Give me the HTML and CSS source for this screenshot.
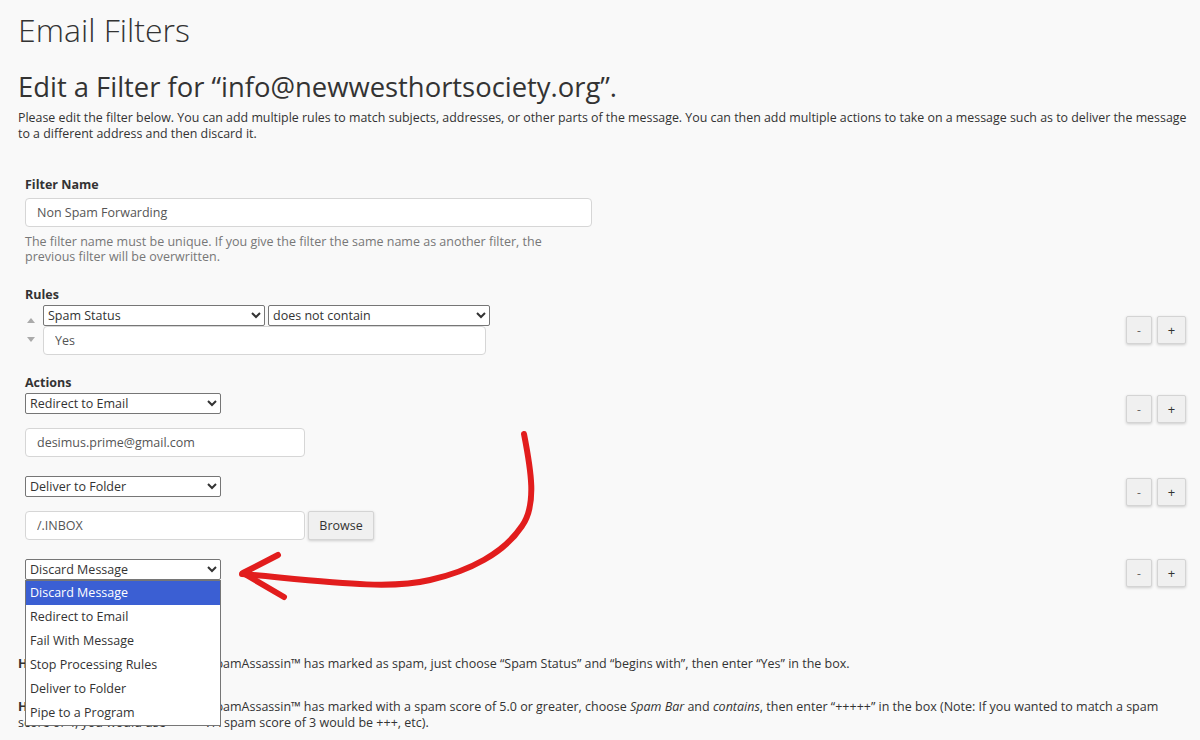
FILE: index.html
```html
<!DOCTYPE html>
<html lang="en">
<head>
<meta charset="utf-8">
<title>Email Filters</title>
<link rel="stylesheet" href="styles.css">
</head>
<body>
<div class="page">
  <h1 class="title">Email Filters</h1>
  <h2 class="subtitle">Edit a Filter for “info@newwesthortsociety.org”.</h2>
  <p class="intro">Please edit the filter below. You can add multiple rules to match subjects, addresses, or other parts of the message. You can then add multiple actions to take on a message such as to deliver the message to a different address and then discard it.</p>

  <form class="filter-form">
    <div class="field">
      <label class="field-label">Filter Name</label>
      <input class="text-input name-input" type="text" value="Non Spam Forwarding">
      <p class="help">The filter name must be unique. If you give the filter the same name as another filter, the previous filter will be overwritten.</p>
    </div>

    <div class="section rules">
      <div class="field-label">Rules</div>
      <div class="row row-center">
        <div class="row-main">
          <div class="sorter"><span class="tri tri-up"></span><span class="tri tri-down"></span></div>
          <div class="rule-fields">
            <div class="select-pair">
              <select class="select select-part"><option>Spam Status</option></select>
              <select class="select select-match"><option>does not contain</option></select>
            </div>
            <input class="text-input rule-input" type="text" value="Yes">
          </div>
        </div>
        <div class="row-buttons">
          <button type="button" class="btn btn-minus">-</button>
          <button type="button" class="btn btn-plus">+</button>
        </div>
      </div>
    </div>

    <div class="section actions">
      <div class="field-label">Actions</div>

      <div class="row action-row">
        <div class="action-fields">
          <select class="select select-action"><option>Redirect to Email</option></select>
          <input class="text-input dest-input" type="text" value="desimus.prime@gmail.com">
        </div>
        <div class="row-buttons offset">
          <button type="button" class="btn btn-minus">-</button>
          <button type="button" class="btn btn-plus">+</button>
        </div>
      </div>

      <div class="row action-row">
        <div class="action-fields">
          <select class="select select-action"><option>Deliver to Folder</option></select>
          <div class="folder-line">
            <input class="text-input dest-input" type="text" value="/.INBOX">
            <button type="button" class="btn btn-browse">Browse</button>
          </div>
        </div>
        <div class="row-buttons offset">
          <button type="button" class="btn btn-minus">-</button>
          <button type="button" class="btn btn-plus">+</button>
        </div>
      </div>

      <div class="row action-row">
        <div class="action-fields">
          <div class="select-wrap">
            <select class="select select-action"><option>Discard Message</option></select>
            <ul class="dropdown">
              <li class="opt opt-active">Discard Message</li>
              <li class="opt">Redirect to Email</li>
              <li class="opt">Fail With Message</li>
              <li class="opt">Stop Processing Rules</li>
              <li class="opt">Deliver to Folder</li>
              <li class="opt">Pipe to a Program</li>
            </ul>
          </div>
        </div>
        <div class="row-buttons">
          <button type="button" class="btn btn-minus">-</button>
          <button type="button" class="btn btn-plus">+</button>
        </div>
      </div>
    </div>
  </form>

  <div class="hints">
    <p><strong>Hint:</strong> To filter all of the mail that SpamAssassin™ has marked as spam, just choose “Spam Status” and “begins with”, then enter “Yes” in the box.</p>
    <p><strong>Hint:</strong> To filter all of the mail that SpamAssassin™ has marked with a spam score of 5.0 or greater, choose <em>Spam Bar</em> and <em>contains</em>, then enter “+++++” in the box (Note: If you wanted to match a spam score of 4, you would use “++++”. A spam score of 3 would be +++, etc).</p>
  </div>

  <svg class="annotation" width="1200" height="740" viewBox="0 0 1200 740" aria-hidden="true">
    <path d="M524 434 C 531 470, 537 505, 522 526 C 504 553, 470 571, 430 580 C 388 590, 330 582, 242 574" fill="none" stroke="#e21d1d" stroke-width="6" stroke-linecap="round"/>
    <path d="M278 555 L 243 573 L 284 597" fill="none" stroke="#e21d1d" stroke-width="6" stroke-linecap="round" stroke-linejoin="round"/>
  </svg>
</div>
</body>
</html>
```

FILE: styles.css
```css
* { box-sizing: border-box; }

html, body {
  margin: 0;
  padding: 0;
  background: #f9f9f9;
}

body {
  font-family: "Open Sans", "Liberation Sans", Arial, sans-serif;
  font-size: 12.5px;
  color: #333;
  overflow: hidden;
  height: 740px;
}

.page {
  position: relative;
  padding: 10px 0 0 18px;
}

.title {
  margin: 0;
  font-size: 32px;
  line-height: 40px;
  font-weight: 300;
  color: #333;
}

.subtitle {
  margin: 20px 0 0;
  font-size: 27.4px;
  line-height: 34px;
  font-weight: 400;
  color: #333;
}

.intro {
  margin: 6px 0 0;
  font-size: 12.4px;
  line-height: 16px;
  color: #333;
}

.filter-form {
  margin-top: 35px;
  padding-left: 7px;
  padding-right: 14px;
}

.field-label {
  display: block;
  font-weight: 700;
  line-height: 16px;
  color: #333;
}

.text-input {
  display: block;
  height: 29px;
  border: 1px solid #d6d6d6;
  border-radius: 4px;
  background: #fff;
  padding: 0 11px;
  font-family: "Open Sans", "Liberation Sans", Arial, sans-serif;
  font-size: 12.5px;
  color: #555;
}

.name-input {
  width: 567px;
  margin-top: 5px;
}

.help {
  margin: 7px 0 0;
  width: 560px;
  line-height: 15px;
  color: #777;
}

.section { margin-top: 23px; }
.actions { margin-top: 20px; }

.row {
  display: flex;
  justify-content: space-between;
  align-items: flex-start;
}

.row-center { align-items: center; margin-top: 2px; }

.row-main { display: flex; align-items: center; }

.sorter {
  width: 18px;
  display: flex;
  flex-direction: column;
  align-items: center;
  gap: 14px;
  padding-right: 6px;
}

.tri {
  width: 0;
  height: 0;
  border-left: 4px solid transparent;
  border-right: 4px solid transparent;
}
.tri-up { border-bottom: 5px solid #aaa; }
.tri-down { border-top: 5px solid #aaa; }

.select-pair { display: flex; gap: 3px; }

.select {
  display: block;
  height: 21px;
  font-family: "Open Sans", "Liberation Sans", Arial, sans-serif;
  font-size: 12.5px;
  color: #333;
  background: #fff;
  border: 1px solid #767676;
  border-radius: 2px;
  padding: 0;
}

.select-part { width: 222px; }
.select-match { width: 222px; }

.rule-input {
  width: 443px;
  margin-top: 0;
}

.row-buttons {
  display: flex;
  gap: 5px;
}
.row-buttons.offset { margin-top: 2px; }

.btn {
  font-family: "Open Sans", "Liberation Sans", Arial, sans-serif;
  font-size: 12px;
  color: #333;
  background: #f0f0f0;
  border: 1px solid #d4d4d4;
  border-radius: 2px;
  box-shadow: 0 1px 3px rgba(0,0,0,0.18);
  height: 28px;
  padding: 0;
  cursor: pointer;
}
.btn-minus { width: 26px; color: #666; }
.btn-plus { width: 29px; font-size: 13px; }

.action-row { margin-top: 19px; }
.actions .field-label + .action-row { margin-top: 2px; }

.select-action { width: 196px; }

.dest-input {
  width: 280px;
  margin-top: 14px;
}

.folder-line {
  display: flex;
  align-items: flex-start;
  gap: 3px;
}

.btn-browse {
  margin-top: 14px;
  width: 66px;
  height: 29px;
  font-size: 12.5px;
}

.select-wrap { position: relative; }

.dropdown {
  position: absolute;
  top: 21px;
  left: 0;
  width: 196px;
  margin: 0;
  padding: 0;
  list-style: none;
  background: #fff;
  border: 1px solid #767676;
  z-index: 5;
}

.opt {
  height: 24px;
  line-height: 24px;
  padding-left: 4px;
  font-size: 12.5px;
  color: #333;
}

.opt-active {
  background: #3b5fd3;
  color: #fff;
}

.hints {
  margin-top: 69px;
  padding-right: 24px;
}

.hints p {
  margin: 0 0 27px;
  line-height: 16px;
  color: #333;
}

.annotation {
  position: absolute;
  left: 0;
  top: 0;
  pointer-events: none;
  z-index: 10;
}
```
